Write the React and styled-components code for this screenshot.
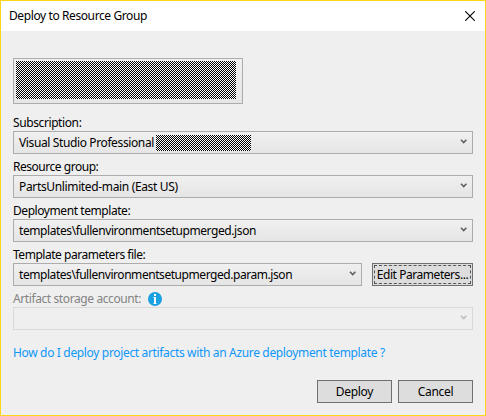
import React from "react";
import styled, { createGlobalStyle } from "styled-components";

const GlobalStyle = createGlobalStyle`
  *, *::before, *::after { box-sizing: border-box; }
  html, body { margin: 0; padding: 0; }
  body { font: 12px/16px "Noto Sans", "Open Sans", sans-serif; color: #000; }
`;

const Dialog = styled.div`
  width: 486px;
  height: 416px;
  display: flex;
  flex-direction: column;
  background: #efefef;
  border: 1px solid #fcd514;
`;

const TitleBar = styled.header`
  height: 30px;
  display: flex;
  align-items: center;
  justify-content: space-between;
  padding: 0 10px 0 8px;
  background: #fff;
`;

const Text = styled.span`
  letter-spacing: ${(p) => p.$track ?? -0.4}px;
  white-space: nowrap;
`;

const CloseButton = styled.button`
  display: flex;
  padding: 0 0 1px;
  border: 0;
  background: none;
`;

const Body = styled.main`
  flex: 1;
  padding: 27px 12px 12px;
`;

const Redacted = styled.div`
  width: ${(p) => p.$w}px;
  height: ${(p) => p.$h}px;
  background: conic-gradient(#fff 25%, #000 0 50%, #fff 0 75%, #000 0) 0 0 / 2px 2px;
`;

const AccountPicker = styled.div`
  width: 230px;
  height: 46px;
  padding: 2px;
  border: 1px solid #acacac;
  background: linear-gradient(#f0f0f0, #e5e5e5);
`;

const Fields = styled.div`
  display: flex;
  flex-direction: column;
  margin-top: 6px;
`;

const Label = styled.div`
  height: 21px;
  display: flex;
  align-items: center;
  gap: 7px;
  padding-top: 4px;
  color: ${(p) => (p.$disabled ? "#838383" : "#000")};
`;

const Row = styled.div`
  display: flex;
  gap: 10px;
`;

const Select = styled.div`
  flex: 1;
  height: 23px;
  display: flex;
  align-items: center;
  padding: 0 5px;
  border: 1px solid ${(p) => (p.$disabled ? "#d9d9d9" : "#acacac")};
  background: ${(p) => (p.$disabled ? "#efefef" : "linear-gradient(#f0f0f0, #e5e5e5)")};
  color: ${(p) => (p.$disabled ? "#bfbfbf" : "#606060")};
`;

const Value = styled.div`
  flex: 1;
  display: flex;
  align-items: center;
  color: #000;
`;

const NameSlot = styled.div`
  width: 137px;
`;

const Button = styled.button`
  width: ${(p) => p.$w}px;
  height: 23px;
  display: flex;
  align-items: center;
  justify-content: center;
  padding: 0;
  border: 1px solid #707070;
  background: #ddd;
  color: #000;
  font: inherit;
  outline: ${(p) => (p.$focused ? "1px dashed #555" : "none")};
  outline-offset: -3px;
`;

const HelpLink = styled.a`
  display: block;
  margin-top: 15px;
  color: #0e97fa;
`;

const Actions = styled.footer`
  display: flex;
  justify-content: flex-end;
  gap: 6px;
  margin-top: 19px;
`;

const Chevron = () => (
  <svg width="7" height="9" viewBox="0 0 7 9">
    <path d="M1 1.8 3.7 4.6 6.4 1.8" fill="none" stroke="currentColor" strokeWidth="1.6" />
  </svg>
);

const CloseIcon = () => (
  <svg width="10" height="10" viewBox="0 0 10 10">
    <path d="M0.2 0.2 9.8 9.8M9.8 0.2 0.2 9.8" stroke="#000" strokeWidth="1.1" />
  </svg>
);

const InfoIcon = () => (
  <svg width="14" height="14" viewBox="0 0 14 14">
    <circle cx="7" cy="7" r="7" fill="#1ba1e2" />
    <path d="M6 2h2v2H6zM5.5 5H8v6h.5v1h-3v-1H6V6h-.5z" fill="#fff" />
  </svg>
);

function Field({ label, labelTrack, info, disabled, children, extra }) {
  return (
    <div>
      <Label $disabled={disabled}>
        <Text $track={labelTrack}>{label}</Text>
        {info && <InfoIcon />}
      </Label>
      <Row>
        <Select $disabled={disabled}>
          <Value>{children}</Value>
          <Chevron />
        </Select>
        {extra}
      </Row>
    </div>
  );
}

export default function App() {
  return (
    <>
      <GlobalStyle />
      <Dialog>
        <TitleBar>
          <Text>Deploy to Resource Group</Text>
          <CloseButton aria-label="Close"><CloseIcon /></CloseButton>
        </TitleBar>
        <Body>
          <AccountPicker><Redacted $w={220} $h={38} /></AccountPicker>
          <Fields>
            <Field label="Subscription:">
              <NameSlot><Text $track={-0.38}>Visual Studio Professional</Text></NameSlot>
              <Redacted $w={95} $h={16} />
            </Field>
            <Field label="Resource group:" labelTrack={-0.47}>
              <Text $track={-0.35}>PartsUnlimited-main (East US)</Text>
            </Field>
            <Field label="Deployment template:" labelTrack={-0.43}>
              <Text $track={-0.41}>templates\fullenvironmentsetupmerged.json</Text>
            </Field>
            <Field
              label="Template parameters file:"
              labelTrack={-0.47}
              extra={<Button $w={101} $focused><Text $track={-0.45}>Edit Parameters...</Text></Button>}
            >
              <Text $track={-0.44}>templates\fullenvironmentsetupmerged.param.json</Text>
            </Field>
            <Field label="Artifact storage account:" info disabled />
          </Fields>
          <HelpLink><Text $track={-0.34}>How do I deploy project artifacts with an Azure deployment template ?</Text></HelpLink>
          <Actions>
            <Button $w={75}><Text $track={-0.3}>Deploy</Text></Button>
            <Button $w={75}><Text $track={-0.3}>Cancel</Text></Button>
          </Actions>
        </Body>
      </Dialog>
    </>
  );
}
